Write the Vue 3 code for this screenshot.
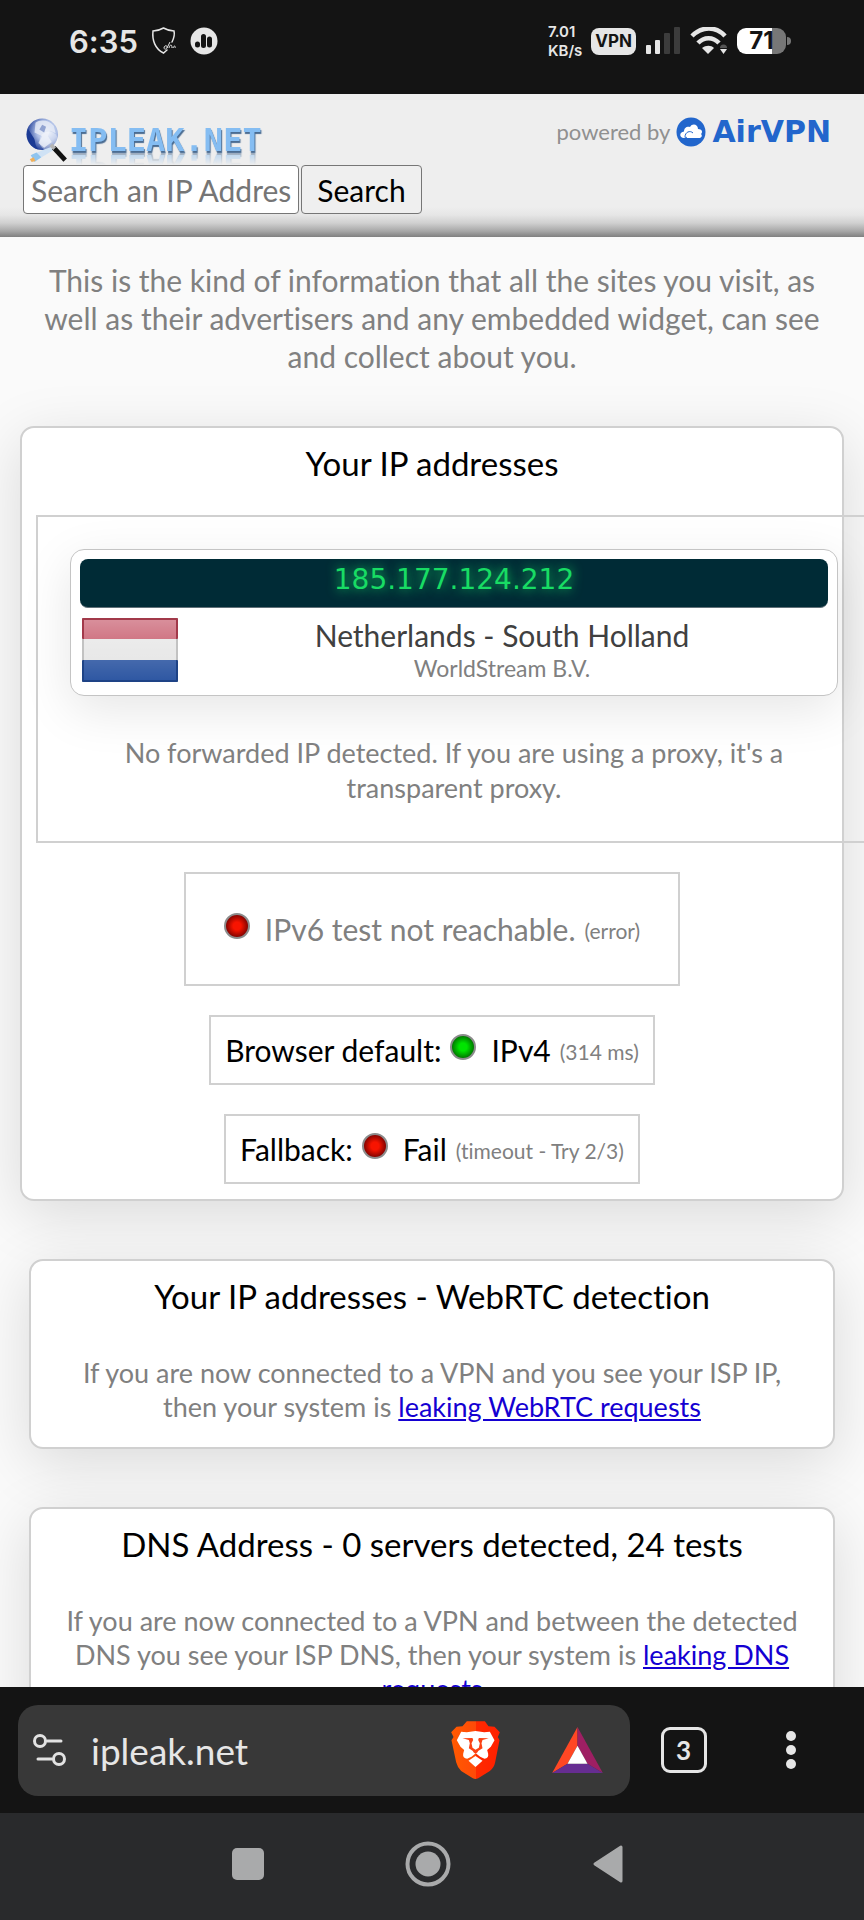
<script setup>

import {ref} from 'vue'

const searchText = ref('')
const url = ref('ipleak.net')
const tabCount = ref(3)

const intro = 'This is the kind of information that all the sites you visit, as well as their advertisers and any embedded widget, can see and collect about you.'

const connection = ref({
    ip: '185.177.124.212',
    place: 'Netherlands - South Holland',
    provider: 'WorldStream B.V.'
})

const protocolTests = ref([
    {label: 'Browser default:', status: 'ok', result: 'IPv4', note: '(314 ms)'},
    {label: 'Fallback:', status: 'fail', result: 'Fail', note: '(timeout - Try 2/3)'},
])

const dnsServers = ref(0)
const dnsTests = ref(24)

</script>

<template>

<div class="phone">

    <div class="status-bar">
        <div class="status-group">
            <span class="clock">6:35</span>
            <svg class="shield-icon" viewBox="0 0 26 28" width="26" height="28">
                <path d="M21 15C23 11 24 8 23 4C19 4 16 3 12.500 1C9 3 6 4 2 4C1 13 4 22 12.500 26L16 23" fill="none" stroke="#e6e6e6" stroke-width="1.500" stroke-linecap="round" />
                <path d="M13 21c0-3 4-3 3 0c-1 2-3 1-3 0M16 21l3-6M18 21c1-4 3-4 3 0M22 21c1-3 3-2 2 0" fill="none" stroke="#e6e6e6" stroke-width="1" />
            </svg>
            <svg viewBox="0 0 28 28" width="28" height="28">
                <circle cx="14" cy="14" r="13.500" fill="#e6e6e6" />
                <path d="M7.500 17v1M13.500 9.500v9M19.500 12v6" stroke="#141414" stroke-width="5" stroke-linecap="round" />
            </svg>
        </div>
        <div class="status-group status-right">
            <span class="speed">7.01<br>KB/s</span>
            <span class="vpn-badge">VPN</span>
            <svg viewBox="0 0 36 28" width="36" height="28">
                <rect x="1" y="18" width="5" height="9" rx="1" fill="#e6e6e6" />
                <rect x="10" y="13" width="5" height="14" rx="1" fill="#e6e6e6" />
                <rect x="19" y="6" width="6" height="21" rx="1" fill="#3c3c3c" />
                <rect x="29" y="0" width="6" height="27" rx="1" fill="#3c3c3c" />
            </svg>
            <svg viewBox="0 0 38 28" width="38" height="28">
                <path d="M2 9C12-1 26-1 35 9M8 16C14 9.500 23 9.500 29 16" fill="none" stroke="#e6e6e6" stroke-width="4.500" />
                <path d="M12 21C16 18 21 18 24 21L18 27Z" fill="#e6e6e6" />
                <path d="M30 21a3.500 3.500 0 0 1 7 0z" fill="#555" />
                <path d="M30 22h7l-3.500 5z" fill="#e6e6e6" />
            </svg>
            <span class="battery">71</span>
        </div>
    </div>

    <main class="site">
        <header class="site-header">
            <div class="header-left">
                <a href="#" class="logo">
                    <svg viewBox="0 0 46 50" width="44" height="48">
                        <defs>
                            <radialGradient id="globe" cx="65%" cy="40%" r="65%">
                                <stop offset="0" stop-color="#eef3fb" />
                                <stop offset="0.500" stop-color="#aebfe6" />
                                <stop offset="1" stop-color="#1e3c96" />
                            </radialGradient>
                        </defs>
                        <circle cx="18" cy="18" r="16.500" fill="url(#globe)" />
                        <path d="M3 12C0 22 5 31 14 34C9 28 12 25 8 20Z" fill="#1b3a94" />
                        <path d="M11 6C16 2 25 3 30 9L32 17L26 14L24 20L28 26L20 32L14 27L18 20L10 16Z" fill="#e6ebf6" opacity="0.800" />
                        <path d="M18 8L22 10L20 16L15 13Z" fill="#6f86c2" opacity="0.700" />
                        <circle cx="25" cy="25" r="10" fill="#ffffff" opacity="0.350" />
                        <path d="M6 40L20 34L31 30L29 35L14 44Z" fill="#cfe2f5" />
                        <path d="M6 40L12 37L17 42L10 47Z" fill="#8fc4ee" />
                        <path d="M5 44L9 42L11 46L7 47Z" fill="#f0b05a" />
                        <path d="M30 32L42 45" stroke="#111" stroke-width="5" />
                        <path d="M27 29L31 33" stroke="#b5b5b5" stroke-width="4" />
                    </svg>
                    <span class="logo-text">IPLEAK.NET</span>
                </a>
                <form class="search" @submit.prevent>
                    <input type="text" v-model="searchText" placeholder="Search an IP Address" aria-label="Search an IP Address">
                    <button type="submit">Search</button>
                </form>
            </div>
            <a href="#" class="powered">
                <span>powered by</span>
                <svg viewBox="0 0 30 30" width="30" height="30">
                    <circle cx="15" cy="15" r="14.500" fill="#2266cc" />
                    <path d="M8 21C3 21 3 15 8 14.500C8 10 12 9 14 10C16 6 22 7 22 12C26 12 27 15 25 17C27 19 25 21 23 21H11C9 17 13 15 16 17" fill="#fff" />
                    <path d="M9 20C9 15 14 13 17 16" fill="none" stroke="#2266cc" stroke-width="1" />
                </svg>
                <strong>AirVPN</strong>
            </a>
        </header>

        <p class="intro">{{ intro }}</p>

        <section class="card card-wide">
            <h2>Your IP addresses</h2>

            <div class="ip-box">
                <div class="ip-card">
                    <div class="ip-value">{{ connection.ip }}</div>
                    <div class="ip-details">
                        <svg class="flag" viewBox="0 0 96 64" width="96" height="64">
                            <defs>
                                <linearGradient id="gloss" x1="0" y1="0" x2="0" y2="1">
                                    <stop offset="0" stop-color="#fff" stop-opacity="0.400" />
                                    <stop offset="0.500" stop-color="#fff" stop-opacity="0.200" />
                                    <stop offset="1" stop-color="#fff" stop-opacity="0.050" />
                                </linearGradient>
                            </defs>
                            <rect width="96" height="64" rx="1" fill="#e4e4e4" />
                            <rect width="96" height="21" rx="1" fill="#bf4458" />
                            <rect y="42" width="96" height="22" rx="1" fill="#244f9e" />
                            <rect x="2" y="2" width="92" height="60" fill="url(#gloss)" />
                            <rect x="1" y="1" width="94" height="62" fill="none" stroke="#000" stroke-opacity="0.150" stroke-width="2" />
                        </svg>
                        <div class="ip-place">
                            <div class="place">{{ connection.place }}</div>
                            <div class="provider">{{ connection.provider }}</div>
                        </div>
                    </div>
                </div>
                <p class="note">No forwarded IP detected. If you are using a proxy, it's a transparent proxy.</p>
            </div>

            <div class="test-box test-error">
                <span class="led fail"></span>
                <span>IPv6 test not reachable.</span>
                <small>(error)</small>
            </div>

            <div class="test-box" v-for="test in protocolTests" :key="test.label">
                <span>{{ test.label }}</span>
                <span class="led" :class="test.status"></span>
                <span>{{ test.result }}</span>
                <small>{{ test.note }}</small>
            </div>
        </section>

        <section class="card">
            <h2>Your IP addresses - WebRTC detection</h2>
            <p class="note leak">
                If you are now connected to a VPN and you see your ISP IP, then your system is
                <a href="#">leaking WebRTC requests</a>
            </p>
        </section>

        <section class="card">
            <h2>DNS Address - {{ dnsServers }} servers detected, {{ dnsTests }} tests</h2>
            <p class="note leak">
                If you are now connected to a VPN and between the detected DNS you see your ISP DNS, then your system is
                <a href="#">leaking DNS requests</a>
            </p>
        </section>
    </main>

    <div class="browser-bar">
        <div class="address">
            <svg viewBox="0 0 34 32" width="34" height="32">
                <g fill="none" stroke="#e2e2e2" stroke-width="3" stroke-linecap="round">
                    <circle cx="7" cy="7" r="5.500" />
                    <path d="M14 7H28" />
                    <circle cx="26" cy="25" r="5.500" />
                    <path d="M5 25H19" />
                </g>
            </svg>
            <input type="text" v-model="url" aria-label="Address">
            <button aria-label="Shields">
                <svg viewBox="57 96 146 174" width="49" height="58">
                    <defs>
                        <linearGradient id="brave">
                            <stop offset="0" stop-color="#ff5a00" />
                            <stop offset="0.500" stop-color="#ff4a08" />
                            <stop offset="0.510" stop-color="#ff2a00" />
                            <stop offset="1" stop-color="#ff2000" />
                        </linearGradient>
                    </defs>
                    <path d="M104 97H158L169 112L187 113L203 130L197 144L202 154L189 220Q186 236 173 246L138 268Q130 272 122 268L87 246Q76 236 72 220L58 154L64 144L57 130L73 113L91 112Z" fill="url(#brave)" />
                    <path d="M87 128L104 130L130 126L156 130L173 128L187 154L176 173L165 183L168 194Q170 208 157 209L144 203L131 193L118 203L105 209Q91 208 93 194L96 183L85 173L74 154Z" fill="#fff" />
                    <path d="M130 201L151 215L130 234L109 215Z" fill="#fff" />
                    <path d="M91 148L121 147L123 153L118 163L121 176L130 182L140 176L143 163L138 153L140 147L170 148L151 153L148 163L151 178L138 186L136 190L130 194L124 190L122 186L110 178L113 163L110 153Z" fill="#fb4214" />
                </svg>
            </button>
            <button aria-label="Rewards">
                <svg viewBox="0 0 152 138" width="51" height="46">
                    <path d="M76 0L0 138L46 110L76 56Z" fill="#ff4724" />
                    <path d="M76 0L152 138L106 110L76 56Z" fill="#9e1f63" />
                    <path d="M0 138H152L106 110H46Z" fill="#662d91" />
                    <path d="M76 56L106 110H46Z" fill="#fff" />
                </svg>
            </button>
        </div>
        <button class="bar-button" aria-label="Tabs"><span class="tab-count">{{ tabCount }}</span></button>
        <button class="bar-button" aria-label="Menu">
            <svg viewBox="0 0 10 38" width="10" height="38">
                <g fill="#e6e6e6">
                    <circle cx="5" cy="5" r="5" />
                    <circle cx="5" cy="19" r="5" />
                    <circle cx="5" cy="33" r="5" />
                </g>
            </svg>
        </button>
    </div>

    <nav class="system-nav">
        <button aria-label="Recent apps">
            <svg viewBox="0 0 32 32" width="32" height="32">
                <rect width="32" height="32" rx="5" fill="#a9aaab" />
            </svg>
        </button>
        <button aria-label="Home">
            <svg viewBox="0 0 46 46" width="46" height="46">
                <circle cx="23" cy="23" r="20.500" fill="none" stroke="#a9aaab" stroke-width="4" />
                <circle cx="23" cy="23" r="12.500" fill="#a9aaab" />
            </svg>
        </button>
        <button aria-label="Back">
            <svg viewBox="0 0 32 38" width="32" height="38">
                <path d="M29 2V36L3 19Z" fill="#a9aaab" stroke="#a9aaab" stroke-width="3" stroke-linejoin="round" />
            </svg>
        </button>
    </nav>

</div>

</template>

<style>
body {
    margin: 0;
    background-color: #141414;
}
</style>

<style scoped>

.phone {
    display: flex;
    flex-direction: column;
    height: 100vh;
    overflow: hidden;
    font-family: Lato, "Liberation Sans", sans-serif;
    font-variant-ligatures: none;
}

.phone * {
    box-sizing: border-box;
}

button {
    padding: 0;
    border: none;
    background: none;
    font-family: inherit;
}

svg {
    display: block;
    flex-shrink: 0;
}

.status-bar {
    display: flex;
    justify-content: space-between;
    align-items: center;
    flex-shrink: 0;
    height: 94px;
    padding: 0 73px 12px 69px;
    background-color: #141414;
    color: #e6e6e6;
    font-family: Inter, sans-serif;
}

.status-group {
    display: flex;
    align-items: center;
    gap: 13px;
}

.status-right {
    gap: 9px;
}

.clock {
    font-size: 31px;
    font-weight: 600;
}

.speed {
    font-size: 15px;
    line-height: 19px;
    font-weight: 600;
}

.vpn-badge {
    padding: 0 4px;
    border-radius: 8px;
    background-color: #e6e6e6;
    color: #141414;
    font-size: 17px;
    line-height: 27px;
    font-weight: 700;
}

.battery {
    position: relative;
    width: 49px;
    margin-right: 5px;
    border-radius: 9px;
    background: linear-gradient(to right, #fff 71%, #777 71%);
    color: #141414;
    font-size: 24px;
    line-height: 26px;
    font-weight: 700;
    text-align: center;
}

.battery::after {
    content: "";
    position: absolute;
    right: -5px;
    top: 9px;
    width: 4px;
    height: 8px;
    border-radius: 0 4px 4px 0;
    background-color: #777;
}

.site {
    flex: 1;
    min-height: 0;
    overflow: hidden;
    background-color: #fafafa;
    text-align: center;
}

.site-header {
    display: flex;
    justify-content: space-between;
    align-items: flex-start;
    height: 143px;
    padding: 22px 33px 0 23px;
    background: linear-gradient(to top, #808080, #a8a8a8 6px, #d0d0d0 14px, #e6e6e6 22px, #eeeeee 30px);
}

.logo {
    display: flex;
    align-items: center;
    height: 49px;
    padding-left: 2px;
    text-decoration: none;
}

.logo-text {
    height: 28px;
    color: #85bdf2;
    font-family: "DejaVu Sans Mono", monospace;
    font-size: 32px;
    line-height: 26px;
    font-weight: 700;
    text-shadow: 1px 2px 1px #4a6c92;
    -webkit-box-reflect: below -4px linear-gradient(transparent 50%, rgba(0, 0, 0, 0.6));
}

.search {
    display: flex;
    gap: 2px;
}

.search input {
    width: 276px;
    height: 49px;
    padding: 0 7px;
    border: 1px solid #767676;
    border-radius: 4px;
    background-color: #fff;
    font-family: inherit;
    font-size: 30px;
}

.search input::placeholder {
    color: #757575;
}

.search button {
    width: 121px;
    height: 49px;
    border: 1px solid #767676;
    border-radius: 4px;
    background-color: #efefef;
    color: #000;
    font-size: 30px;
}

.powered {
    display: flex;
    align-items: center;
    gap: 6px;
    color: #909090;
    font-size: 22px;
    line-height: 32px;
    text-decoration: none;
}

.powered strong {
    color: #2266cc;
    font-family: "DejaVu Sans", sans-serif;
    font-size: 30px;
}

.intro {
    margin: 24px 28px 51px;
    color: #808080;
    font-size: 30px;
    line-height: 38px;
}

.card {
    margin: 0 29px 58px;
    padding: 13px 14px 15px;
    border: 2px solid #d0d0d0;
    border-radius: 14px;
    background-color: #fff;
    box-shadow: 0 14px 60px rgba(0, 0, 0, 0.13);
}

.card-wide {
    display: flex;
    flex-direction: column;
    align-items: center;
    gap: 29px;
    margin: 0 20px 58px;
}

h2 {
    margin: 0;
    color: #000;
    font-size: 33px;
    line-height: 45px;
    font-weight: 400;
}

.ip-box {
    align-self: flex-start;
    width: calc(100% + 44px);
    padding: 32px;
    border: 2px solid #d0d0d0;
}

.ip-card {
    padding: 9px;
    border: 1px solid #c4c4c4;
    border-radius: 14px;
    background-color: #fff;
    box-shadow: 0 14px 50px rgba(0, 0, 0, 0.1);
}

.ip-value {
    height: 49px;
    border-radius: 8px;
    border-bottom: 1px solid #607078;
    background-color: #002b36;
    color: #18dc64;
    font-family: "DejaVu Sans", sans-serif;
    font-size: 28px;
    line-height: 42px;
    text-shadow: 0 0 12px #18dc64;
}

.ip-details {
    display: flex;
    align-items: flex-start;
    padding: 10px 2px 2px;
}

.ip-place {
    flex: 1;
}

.place {
    color: #404040;
    font-size: 30px;
    line-height: 34px;
}

.provider {
    color: #808080;
    font-size: 23px;
    line-height: 32px;
}

.note {
    margin: 39px 40px 4px;
    color: #808080;
    font-size: 27px;
    line-height: 35px;
}

.leak {
    margin: 37px 10px 8px;
    line-height: 34px;
}

.leak a {
    color: #1400d2;
}

.test-box {
    display: flex;
    align-items: center;
    gap: 9px;
    height: 70px;
    padding: 0 14px;
    border: 2px solid #d0d0d0;
    color: #000;
    font-size: 30px;
    line-height: 34px;
}

.test-error {
    height: 114px;
    padding: 0 38px;
    color: #808080;
}

.test-box small {
    padding-top: 4px;
    color: #808080;
    font-size: 21px;
}

.led {
    width: 26px;
    height: 26px;
    margin: 0 6px 6px 0;
    border: 2px solid #8c8c8c;
    border-radius: 50%;
}

.led.fail {
    background: radial-gradient(circle, #f81400 25%, #6e0000 80%);
}

.led.ok {
    background: radial-gradient(circle, #00e400 25%, #006400 80%);
}

.browser-bar {
    display: flex;
    align-items: center;
    flex-shrink: 0;
    height: 126px;
    padding: 0 20px 0 18px;
    background-color: #141414;
}

.address {
    display: flex;
    align-items: center;
    flex: 1;
    min-width: 0;
    height: 91px;
    padding: 0 27px 0 15px;
    border-radius: 20px;
    background-color: #383838;
}

.address input {
    flex: 1;
    min-width: 0;
    padding: 0 0 0 24px;
    border: none;
    background: none;
    color: #e6e6e6;
    font-family: inherit;
    font-size: 37px;
}

.address button + button {
    margin-left: 52px;
}

.bar-button {
    display: flex;
    justify-content: center;
    align-items: center;
    width: 107px;
    height: 91px;
}

.tab-count {
    width: 46px;
    height: 46px;
    border: 3px solid #e6e6e6;
    border-radius: 9px;
    color: #e6e6e6;
    font-size: 26px;
    font-weight: 700;
    line-height: 40px;
}

.system-nav {
    display: flex;
    justify-content: center;
    flex-shrink: 0;
    height: 107px;
    padding: 0 8px 6px 0;
    background-color: #292a2c;
}

.system-nav button {
    display: flex;
    justify-content: center;
    align-items: center;
    width: 180px;
}

</style>
